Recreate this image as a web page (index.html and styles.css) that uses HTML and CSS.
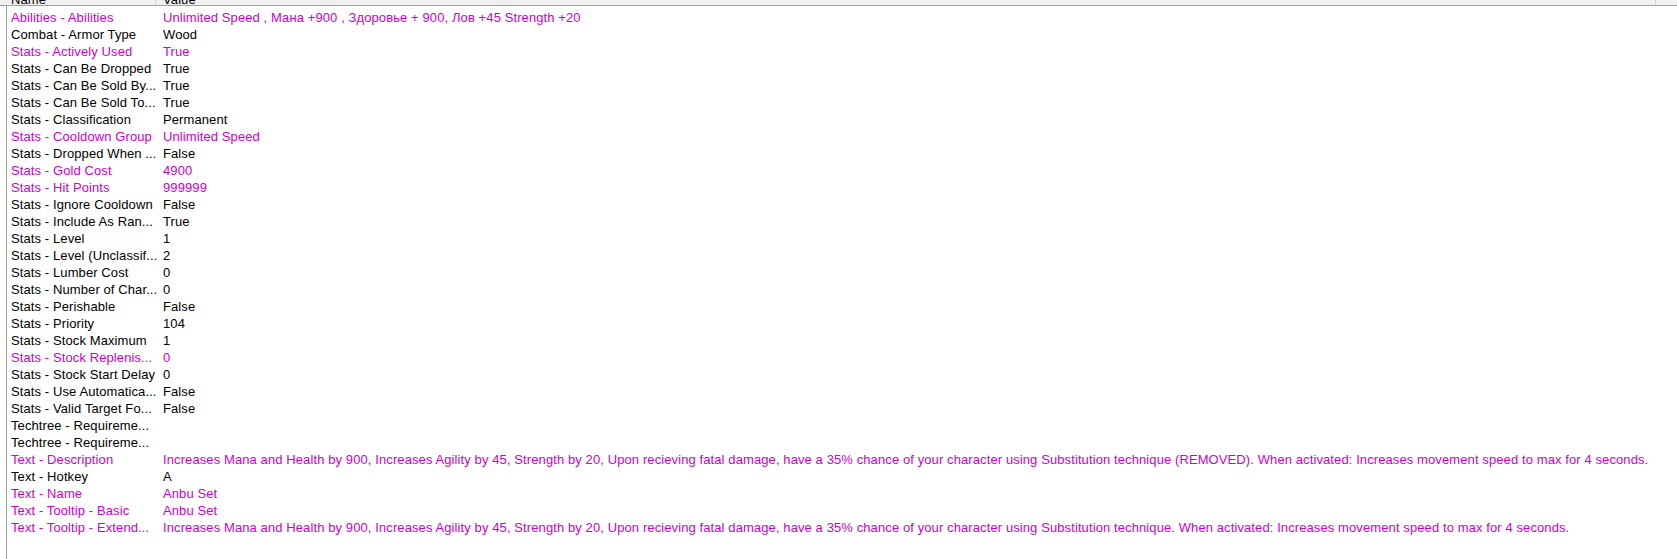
FILE: index.html
```html
<!DOCTYPE html>
<html>
<head>
<meta charset="utf-8">
<link rel="stylesheet" href="styles.css">
</head>
<body>
<div class="grid">
  <div class="header">
    <div class="hcell name">Name</div>
    <div class="hcell value">Value</div>
    <div class="hcell rest"></div>
  </div>
  <div class="body">
    <div class="row mod"><span class="n">Abilities - Abilities</span><span class="v">Unlimited Speed , Мана +900 , Здоровье + 900, Лов +45 Strength +20</span></div>
    <div class="row"><span class="n">Combat - Armor Type</span><span class="v">Wood</span></div>
    <div class="row mod"><span class="n">Stats - Actively Used</span><span class="v">True</span></div>
    <div class="row"><span class="n">Stats - Can Be Dropped</span><span class="v">True</span></div>
    <div class="row"><span class="n">Stats - Can Be Sold By...</span><span class="v">True</span></div>
    <div class="row"><span class="n">Stats - Can Be Sold To...</span><span class="v">True</span></div>
    <div class="row"><span class="n">Stats - Classification</span><span class="v">Permanent</span></div>
    <div class="row mod"><span class="n">Stats - Cooldown Group</span><span class="v">Unlimited Speed</span></div>
    <div class="row"><span class="n">Stats - Dropped When ...</span><span class="v">False</span></div>
    <div class="row mod"><span class="n">Stats - Gold Cost</span><span class="v">4900</span></div>
    <div class="row mod"><span class="n">Stats - Hit Points</span><span class="v">999999</span></div>
    <div class="row"><span class="n">Stats - Ignore Cooldown</span><span class="v">False</span></div>
    <div class="row"><span class="n">Stats - Include As Ran...</span><span class="v">True</span></div>
    <div class="row"><span class="n">Stats - Level</span><span class="v">1</span></div>
    <div class="row"><span class="n">Stats - Level (Unclassif...</span><span class="v">2</span></div>
    <div class="row"><span class="n">Stats - Lumber Cost</span><span class="v">0</span></div>
    <div class="row"><span class="n">Stats - Number of Char...</span><span class="v">0</span></div>
    <div class="row"><span class="n">Stats - Perishable</span><span class="v">False</span></div>
    <div class="row"><span class="n">Stats - Priority</span><span class="v">104</span></div>
    <div class="row"><span class="n">Stats - Stock Maximum</span><span class="v">1</span></div>
    <div class="row mod"><span class="n">Stats - Stock Replenis...</span><span class="v">0</span></div>
    <div class="row"><span class="n">Stats - Stock Start Delay</span><span class="v">0</span></div>
    <div class="row"><span class="n">Stats - Use Automatica...</span><span class="v">False</span></div>
    <div class="row"><span class="n">Stats - Valid Target Fo...</span><span class="v">False</span></div>
    <div class="row"><span class="n">Techtree - Requireme...</span><span class="v"></span></div>
    <div class="row"><span class="n">Techtree - Requireme...</span><span class="v"></span></div>
    <div class="row mod"><span class="n">Text - Description</span><span class="v">Increases Mana and Health by 900, Increases Agility by 45, Strength by 20, Upon recieving fatal damage, have a 35% chance of your character using Substitution technique (REMOVED). When activated: Increases movement speed to max for 4 seconds.</span></div>
    <div class="row"><span class="n">Text - Hotkey</span><span class="v">A</span></div>
    <div class="row mod"><span class="n">Text - Name</span><span class="v">Anbu Set</span></div>
    <div class="row mod"><span class="n">Text - Tooltip - Basic</span><span class="v">Anbu Set</span></div>
    <div class="row mod"><span class="n">Text - Tooltip - Extend...</span><span class="v">Increases Mana and Health by 900, Increases Agility by 45, Strength by 20, Upon recieving fatal damage, have a 35% chance of your character using Substitution technique. When activated: Increases movement speed to max for 4 seconds.</span></div>
  </div>
</div>
</body>
</html>
```
FILE: styles.css
```css
html, body {
  margin: 0;
  padding: 0;
  background: #ffffff;
}
body {
  font-family: "Liberation Sans", Arial, sans-serif;
  font-size: 13px;
  letter-spacing: 0.1px;
  color: #000000;
  width: 1677px;
  height: 559px;
  overflow: hidden;
}
.grid {
  display: flex;
  flex-direction: column;
  height: 559px;
}
.header {
  display: flex;
  height: 5px;
  background: #f0f0f0;
  border-bottom: 1px solid #a0a0a0;
  overflow: hidden;
  flex: none;
}
.hcell {
  height: 5px;
  line-height: 0;
  padding-left: 4px;
  box-sizing: border-box;
  border-right: 1px solid #d5d5d5;
  white-space: nowrap;
}
.hcell.name {
  width: 156px;
  padding-left: 11px;
}
.hcell.value {
  width: 1500px;
  padding-left: 7px;
}
.hcell.rest {
  flex: 1;
  border-right: none;
}
.body {
  flex: 1;
  margin-left: 6px;
  border-left: 1px solid #a0a0a0;
  padding-top: 3px;
}
.row {
  display: flex;
  height: 17px;
  line-height: 17px;
  white-space: nowrap;
}
.row.mod {
  color: #cc00cc;
}
.n {
  width: 152px;
  padding-left: 4px;
  box-sizing: border-box;
  overflow: hidden;
  flex: none;
}
.v {
  padding-left: 4px;
}
```
